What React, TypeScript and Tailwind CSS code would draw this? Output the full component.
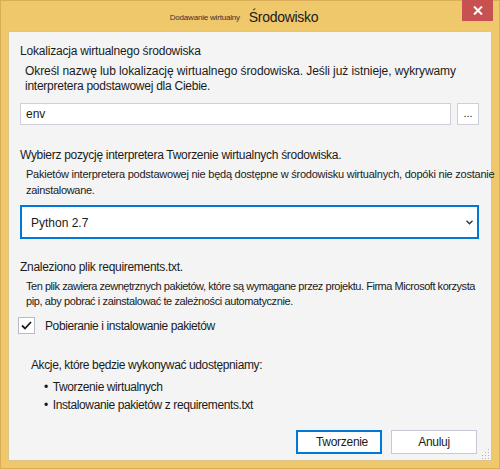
import React from 'react';

const font = { fontFamily: '"Liberation Sans", Arial, sans-serif' };

const App: React.FC = () => {
  return (
    <div
      className="w-[500px] h-[469px] bg-[#efc86c] border border-[#d9ae56] flex flex-col text-[#1b1b1b] whitespace-nowrap"
      style={font}
    >
      {/* title bar */}
      <div className="h-[30px] flex items-start shrink-0">
        <div className="flex-1 flex items-center justify-center pt-[6px] pl-[25px] gap-[9px]">
          <span className="text-[8px] leading-[12px] text-[#333] mt-[2px] tracking-[-0.2px]">Dodawanie wirtualny</span>
          <span className="text-[14px] leading-[20px] tracking-[-0.3px]">Środowisko</span>
        </div>
        <div className="w-[31px] h-[21px] mr-[6px] -mt-px bg-[#c75050] flex items-center justify-center">
          <svg width="10" height="9" viewBox="0 0 10 9">
            <path d="M1 0.5 L9 8.5 M9 0.5 L1 8.5" stroke="#fff" strokeWidth="2" />
          </svg>
        </div>
      </div>

      {/* content */}
      <div className="mx-[7px] h-[430px] bg-[#f4f4f4] border border-[#dcc48e] pl-[11px] flex flex-col relative">
        <div className="mt-[11px] text-[12px] leading-[16px] tracking-[-0.2px]">Lokalizacja wirtualnego środowiska</div>
        <div className="mt-[5px] ml-[5px] text-[12px] leading-[15px] tracking-[-0.08px]">
          <div>Określ nazwę lub lokalizację wirtualnego środowiska. Jeśli już istnieje, wykrywamy</div>
          <div className="tracking-[-0.25px]">interpretera podstawowej dla Ciebie.</div>
        </div>

        <div className="mt-[9px] flex gap-[6px]">
          <div className="w-[431px] h-[22px] bg-white border border-[#cfcfdc] flex items-center pl-[5px] text-[12px]">
            env
          </div>
          <div className="w-[22px] h-[22px] bg-white border border-[#cfcfdc] flex items-center justify-center text-[11px] leading-none pb-[2px]">
            ...
          </div>
        </div>

        <div className="mt-[22px] text-[12px] leading-[16px] tracking-[-0.3px]">Wybierz pozycję interpretera Tworzenie wirtualnych środowiska.</div>
        <div className="mt-[3px] ml-[6px] text-[11px] leading-[16px]">
          <div className="tracking-[-0.24px]">Pakietów interpretera podstawowej nie będą dostępne w środowisku wirtualnych, dopóki nie zostanie</div>
          <div className="tracking-[-0.3px]">zainstalowane.</div>
        </div>

        <div className="mt-[7px] w-[459px] h-[34px] bg-white border-2 border-[#0078d7] flex items-center justify-between pl-[9px] pr-[4px] text-[12px]">
          <span className="pt-[2px]">Python 2.7</span>
          <svg width="7" height="5" viewBox="0 0 7 5">
            <path d="M0.5 0.8 L3.5 3.8 L6.5 0.8" stroke="#333" strokeWidth="1.4" fill="none" />
          </svg>
        </div>

        <div className="mt-[20px] text-[12px] leading-[16px] tracking-[-0.3px]">Znaleziono plik requirements.txt.</div>
        <div className="mt-[4px] ml-[6px] text-[11px] leading-[15px]">
          <div className="tracking-[-0.46px]">Ten plik zawiera zewnętrznych pakietów, które są wymagane przez projektu. Firma Microsoft korzysta</div>
          <div className="tracking-[-0.4px]">pip, aby pobrać i zainstalować te zależności automatycznie.</div>
        </div>

        <div className="mt-[8px] -ml-[2px] flex items-center gap-[10px] h-[17px]">
          <div className="w-[17px] h-[17px] bg-white border border-[#b9b9cc] flex items-center justify-center">
            <svg width="11" height="9" viewBox="0 0 11 9">
              <path d="M1 4.5 L4 7.5 L10 1" stroke="#1b1b1b" strokeWidth="1.8" fill="none" />
            </svg>
          </div>
          <span className="text-[12px] leading-[16px] tracking-[-0.4px]">Pobieranie i instalowanie pakietów</span>
        </div>

        <div className="mt-[23px] ml-[11px] text-[12px] leading-[16px] tracking-[-0.38px]">Akcje, które będzie wykonywać udostępniamy:</div>
        <ul className="mt-[5px] ml-[24px] text-[12px] leading-[18px] tracking-[-0.4px]">
          <li className="flex gap-[5px]"><span>•</span><span>Tworzenie wirtualnych</span></li>
          <li className="flex gap-[5px]"><span>•</span><span>Instalowanie pakietów z requirements.txt</span></li>
        </ul>

        <div className="mt-[16px] flex justify-end gap-[9px] pr-[14px]">
          <button className="w-[86px] h-[24px] bg-white border-2 border-[#0078d7] text-[12px] pl-[6px] tracking-[-0.3px]">Tworzenie</button>
          <button className="w-[86px] h-[24px] bg-white border border-[#c8c8d8] text-[12px] tracking-[-0.3px]">Anuluj</button>
        </div>

        {/* resize grip */}
        <svg className="absolute right-[1px] bottom-[1px]" width="10" height="10" viewBox="0 0 10 10">
          {[
            [8, 0], [8, 3], [5, 3], [8, 6], [5, 6], [2, 6], [8, 9], [5, 9], [2, 9], [-1, 9],
          ].map(([x, y], i) => (
            <rect key={i} x={x} y={y} width="1" height="1" fill="#b4b4b4" />
          ))}
        </svg>
      </div>
    </div>
  );
};

export default App;
